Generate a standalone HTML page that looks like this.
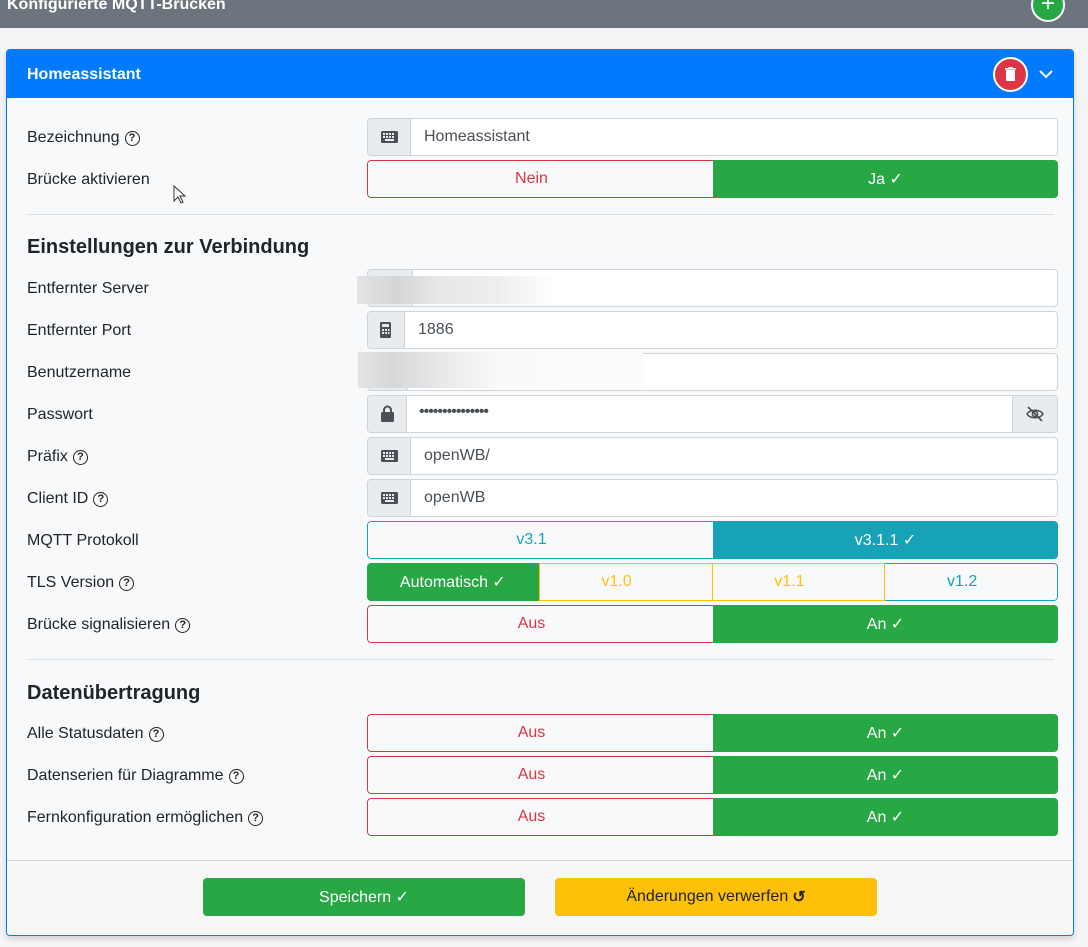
<!DOCTYPE html><html><head><meta charset="utf-8"><style>
*{box-sizing:border-box;margin:0;padding:0}
body{width:1088px;height:947px;background:#f4f5f6;font-family:"Liberation Sans",sans-serif;font-size:16px;color:#212529;position:relative;overflow:hidden}
.top{position:absolute;left:0;top:0;width:1088px;height:28px;background:#6c757d;color:#fff;font-weight:bold;font-size:16px}
.top span{position:absolute;left:7px;top:-4px}
.plus{position:absolute;left:1031px;top:-12px;width:34px;height:34px;border-radius:50%;background:#28a745;border:2px solid #fff;color:#fff;font-size:24px;text-align:center;line-height:28px}
.card{position:absolute;left:6px;top:49px;width:1068px;height:887px;border:1px solid #007bff;border-radius:4px;background:#f8f9fa;overflow:hidden;box-shadow:0 3px 6px rgba(0,0,0,.15)}
.ch{position:absolute;left:0;top:0;width:100%;height:48px;background:#007bff;color:#fff;font-weight:bold}
.ch span{position:absolute;left:20px;top:16px}
.trash{position:absolute;left:986px;top:7px;width:35px;height:35px;border-radius:50%;background:#dc3545;border:2px solid #fff}
.lbl{position:absolute;left:20px;font-size:16px;line-height:20px;margin-top:2px}
.q{display:inline-block;width:15px;height:15px;border:1.6px solid #222;border-radius:50%;font-size:11px;font-weight:bold;text-align:center;line-height:12px;vertical-align:1px;margin-left:5px}
.inp{position:absolute;left:360px;width:691px;height:38px;border:1px solid #ced4da;border-radius:4px;background:#fff;overflow:hidden}
.inp .ic{position:absolute;left:0;top:0;height:36px;background:#e9ecef;border-right:1px solid #ced4da}
.inp .t{position:absolute;top:9px;color:#495057}
.grp{position:absolute;left:360px;width:691px;height:38px;display:flex;border-radius:4px;overflow:hidden}
.grp div{flex:1 1 0;min-width:0;display:flex;align-items:center;justify-content:center;gap:4px}
.grp div.o::after{content:"";width:14px;flex:none}
.h{position:absolute;left:20px;font-size:20px;font-weight:bold;margin-top:1px}
.hr{position:absolute;left:20px;width:1027px;height:1px;background:#dcdfe2}
.btn{position:absolute;top:828px;width:322px;height:38px;border-radius:4px;display:flex;align-items:center;justify-content:center;gap:4px}
</style></head><body>
<div class="top"><span>Konfigurierte MQTT-Brücken</span></div>
<div class="plus">+</div>
<div class="card">
<div class="ch"><span>Homeassistant</span>
<div class="trash"><svg width="31" height="31" viewBox="0 0 31 31"><rect x="11" y="11" width="9" height="11" rx="1" fill="#fff"/><rect x="10" y="9" width="11" height="1.6" fill="#fff"/><rect x="13.5" y="8" width="4" height="1.5" fill="#fff"/></svg></div>
<svg style="position:absolute;left:1031px;top:18px" width="16" height="12"><polyline points="2,3 8,9 14,3" fill="none" stroke="#fff" stroke-width="2"/></svg>
</div>
<div class="lbl" style="top:76px">Bezeichnung<span class="q">?</span></div>
<div class="inp" style="top:68px"><div class="ic" style="width:43px"><svg style="margin:12px 0 0 13px" width="17" height="12"><rect width="17" height="12" rx="1.5" fill="#495057"/><g fill="#e9ecef"><rect x="2" y="2" width="2" height="2"/><rect x="5" y="2" width="2" height="2"/><rect x="8" y="2" width="2" height="2"/><rect x="11" y="2" width="2" height="2"/><rect x="2" y="5" width="2" height="2"/><rect x="5" y="5" width="2" height="2"/><rect x="8" y="5" width="2" height="2"/><rect x="11" y="5" width="2" height="2"/><rect x="4" y="8" width="9" height="2"/></g></svg></div><span class="t" style="left:56px">Homeassistant</span></div>
<div class="lbl" style="top:118px">Brücke aktivieren</div>
<div class="grp" style="top:110px"><div class="o" style="border:1px solid #dc3545;border-right:none;border-radius:4px 0 0 4px;color:#dc3545">Nein</div><div style="background:#28a745;color:#fff">Ja ✓</div></div>
<div class="hr" style="top:164px"></div>
<div class="h" style="top:185px">Einstellungen zur Verbindung</div>
<div class="lbl" style="top:227px">Entfernter Server</div>
<div class="inp" style="top:219px"><div class="ic" style="width:45px"></div></div>
<div style="position:absolute;left:350px;top:226px;width:200px;height:28px;background:linear-gradient(90deg,#e3e4e5,#d3d5d7 20%,#e6e7e8 40%,#eee 70%,rgba(255,255,255,0))"></div>
<div class="lbl" style="top:269px">Entfernter Port</div>
<div class="inp" style="top:261px"><div class="ic" style="width:37px"><svg style="margin:10px 0 0 12px" width="11" height="16"><rect width="11" height="16" rx="1.5" fill="#495057"/><rect x="2" y="2" width="7" height="3" fill="#e9ecef"/><g fill="#e9ecef"><rect x="2" y="7" width="2" height="2"/><rect x="5" y="7" width="2" height="2"/><rect x="8" y="7" width="1.5" height="2"/><rect x="2" y="10" width="2" height="2"/><rect x="5" y="10" width="2" height="2"/><rect x="8" y="10" width="1.5" height="2"/></g></svg></div><span class="t" style="left:50px">1886</span></div>
<div class="lbl" style="top:311px">Benutzername</div>
<div class="inp" style="top:303px"><div class="ic" style="width:40px"></div></div>
<div style="position:absolute;left:351px;top:302px;width:285px;height:36px;background:linear-gradient(90deg,#e3e4e5,#d5d7d9 12%,#e8e9ea 30%,#fafafa 50%,#fcfcfc)"></div>
<div class="lbl" style="top:353px">Passwort</div>
<div class="inp" style="top:345px"><div class="ic" style="width:39px"><svg style="margin:9px 0 0 13px" width="13" height="17"><path d="M3 8V5a3.5 3.5 0 0 1 7 0v3" fill="none" stroke="#495057" stroke-width="2"/><rect y="7" width="13" height="10" rx="1.5" fill="#495057"/></svg></div><span class="t" style="left:51px;top:7px;letter-spacing:-1px">•••••••••••••••</span><div style="position:absolute;right:0;top:0;width:45px;height:36px;background:#e9ecef;border-left:1px solid #ced4da"><svg style="margin:9px 0 0 12px" width="20" height="18"><path d="M2 9c3-5 13-5 16 0c-3 5-13 5-16 0z" fill="none" stroke="#495057" stroke-width="1.6"/><circle cx="10" cy="9" r="2.6" fill="none" stroke="#495057" stroke-width="1.6"/><line x1="3" y1="2" x2="17" y2="16" stroke="#495057" stroke-width="1.6"/></svg></div></div>
<div class="lbl" style="top:395px">Präfix<span class="q">?</span></div>
<div class="inp" style="top:387px"><div class="ic" style="width:43px"><svg style="margin:12px 0 0 13px" width="17" height="12"><rect width="17" height="12" rx="1.5" fill="#495057"/><g fill="#e9ecef"><rect x="2" y="2" width="2" height="2"/><rect x="5" y="2" width="2" height="2"/><rect x="8" y="2" width="2" height="2"/><rect x="11" y="2" width="2" height="2"/><rect x="2" y="5" width="2" height="2"/><rect x="5" y="5" width="2" height="2"/><rect x="8" y="5" width="2" height="2"/><rect x="11" y="5" width="2" height="2"/><rect x="4" y="8" width="9" height="2"/></g></svg></div><span class="t" style="left:56px">openWB/</span></div>
<div class="lbl" style="top:437px">Client ID<span class="q">?</span></div>
<div class="inp" style="top:429px"><div class="ic" style="width:43px"><svg style="margin:12px 0 0 13px" width="17" height="12"><rect width="17" height="12" rx="1.5" fill="#495057"/><g fill="#e9ecef"><rect x="2" y="2" width="2" height="2"/><rect x="5" y="2" width="2" height="2"/><rect x="8" y="2" width="2" height="2"/><rect x="11" y="2" width="2" height="2"/><rect x="2" y="5" width="2" height="2"/><rect x="5" y="5" width="2" height="2"/><rect x="8" y="5" width="2" height="2"/><rect x="11" y="5" width="2" height="2"/><rect x="4" y="8" width="9" height="2"/></g></svg></div><span class="t" style="left:56px">openWB</span></div>
<div class="lbl" style="top:479px">MQTT Protokoll</div>
<div class="grp" style="top:471px"><div class="o" style="border:1px solid #17a2b8;border-right:none;border-radius:4px 0 0 4px;color:#17a2b8">v3.1</div><div style="background:#17a2b8;color:#fff">v3.1.1 ✓</div></div>
<div class="lbl" style="top:521px">TLS Version<span class="q">?</span></div>
<div class="grp" style="top:513px"><div style="background:#28a745;color:#fff">Automatisch ✓</div><div class="o" style="border:1px solid #ffc107;border-right:none;color:#ffc107">v1.0</div><div class="o" style="border:1px solid #ffc107;color:#ffc107">v1.1</div><div class="o" style="border:1px solid #17a2b8;border-left:none;border-radius:0 4px 4px 0;color:#17a2b8">v1.2</div></div>
<div class="lbl" style="top:563px">Brücke signalisieren<span class="q">?</span></div>
<div class="grp" style="top:555px"><div class="o" style="border:1px solid #dc3545;border-right:none;border-radius:4px 0 0 4px;color:#dc3545">Aus</div><div style="background:#28a745;color:#fff">An ✓</div></div>
<div class="hr" style="top:609px"></div>
<div class="h" style="top:631px">Datenübertragung</div>
<div class="lbl" style="top:672px">Alle Statusdaten<span class="q">?</span></div>
<div class="grp" style="top:664px"><div class="o" style="border:1px solid #dc3545;border-right:none;border-radius:4px 0 0 4px;color:#dc3545">Aus</div><div style="background:#28a745;color:#fff">An ✓</div></div>
<div class="lbl" style="top:714px">Datenserien für Diagramme<span class="q">?</span></div>
<div class="grp" style="top:706px"><div class="o" style="border:1px solid #dc3545;border-right:none;border-radius:4px 0 0 4px;color:#dc3545">Aus</div><div style="background:#28a745;color:#fff">An ✓</div></div>
<div class="lbl" style="top:756px">Fernkonfiguration ermöglichen<span class="q">?</span></div>
<div class="grp" style="top:748px"><div class="o" style="border:1px solid #dc3545;border-right:none;border-radius:4px 0 0 4px;color:#dc3545">Aus</div><div style="background:#28a745;color:#fff">An ✓</div></div>
<div style="position:absolute;left:0;top:810px;width:100%;height:80px;background:#f7f7f7;border-top:1px solid #d6d8db"></div>
<div class="btn" style="left:196px;background:#28a745;color:#fff">Speichern ✓</div>
<div class="btn" style="left:548px;background:#ffc107;color:#212529">Änderungen verwerfen <b>↺</b></div>
</div>
<svg style="position:absolute;left:173px;top:185px" width="14" height="20"><path d="M1 1v15l4-4 3 6 2-1-3-6h5z" fill="#fff" stroke="#333" stroke-width="1"/></svg>
</body></html>
